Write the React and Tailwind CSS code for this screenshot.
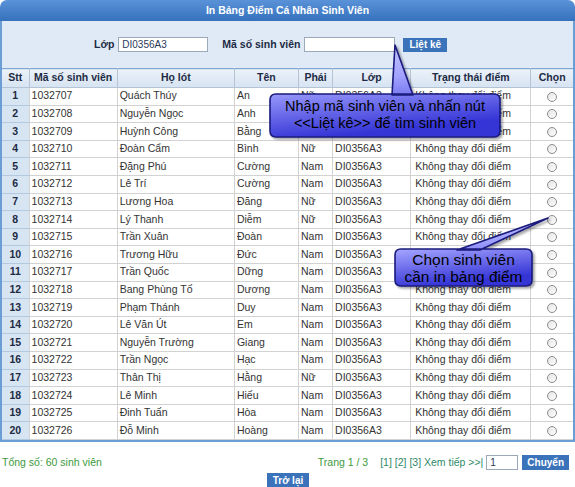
import React from 'react';

const students = [
  ['1032707', 'Quách Thúy', 'An', 'Nữ'],
  ['1032708', 'Nguyễn Ngọc', 'Anh', 'Nữ'],
  ['1032709', 'Huỳnh Công', 'Bằng', 'Nam'],
  ['1032710', 'Đoàn Cẩm', 'Bình', 'Nữ'],
  ['1032711', 'Đặng Phú', 'Cường', 'Nam'],
  ['1032712', 'Lê Trí', 'Cường', 'Nam'],
  ['1032713', 'Lương Hoa', 'Đăng', 'Nữ'],
  ['1032714', 'Lý Thanh', 'Diễm', 'Nữ'],
  ['1032715', 'Trần Xuân', 'Đoàn', 'Nam'],
  ['1032716', 'Trương Hữu', 'Đức', 'Nam'],
  ['1032717', 'Trần Quốc', 'Dững', 'Nam'],
  ['1032718', 'Bang Phùng Tố', 'Dương', 'Nam'],
  ['1032719', 'Phạm Thánh', 'Duy', 'Nam'],
  ['1032720', 'Lê Văn Út', 'Em', 'Nam'],
  ['1032721', 'Nguyễn Trường', 'Giang', 'Nam'],
  ['1032722', 'Trần Ngọc', 'Hạc', 'Nam'],
  ['1032723', 'Thân Thị', 'Hằng', 'Nữ'],
  ['1032724', 'Lê Minh', 'Hiếu', 'Nam'],
  ['1032725', 'Đinh Tuấn', 'Hòa', 'Nam'],
  ['1032726', 'Đỗ Minh', 'Hoàng', 'Nam'],
];

const headers = ['Stt', 'Mã số sinh viên', 'Họ lót', 'Tên', 'Phái', 'Lớp', 'Trạng thái điểm', 'Chọn'];
const widths = ['w-[27px]', 'w-[88px]', 'w-[117px]', 'w-[64px]', 'w-[34px]', 'w-[78px]', 'w-[120px]', 'w-[42px]'];

const Radio = () => (
  <span className="inline-block w-[10px] h-[10px] rounded-full border border-[#8c8c8c] bg-gradient-to-br from-[#e4e4e4] to-white align-middle" />
);

// callout bubble: box + tail drawn as one svg path, text on top
const Callout = ({ className, box, tail, gid, children, textClass }) => (
  <div className={`absolute ${className}`}>
    <svg className="absolute inset-0 overflow-visible" width="100%" height="100%">
      <defs>
        <linearGradient id={gid} x1="0" y1="0" x2="0.25" y2="1">
          <stop offset="0" stopColor="#d4d4ff" />
          <stop offset="0.45" stopColor="#a2a2ff" />
          <stop offset="1" stopColor="#3434d6" />
        </linearGradient>
        <filter id={`${gid}s`} x="-10%" y="-10%" width="130%" height="140%">
          <feDropShadow dx="2" dy="2" stdDeviation="1.2" floodColor="#000" floodOpacity="0.35" />
        </filter>
      </defs>
      <path d={`${box} ${tail}`} fill={`url(#${gid})`} stroke="#1a1a7c" strokeWidth="1.6" strokeLinejoin="round" filter={`url(#${gid}s)`} />
    </svg>
    <div className={`relative text-center text-black leading-[17px] ${textClass}`}>{children}</div>
  </div>
);

export default function App() {
  return (
    <div className="relative w-[575px] h-[487px] bg-white overflow-hidden font-['Liberation_Sans',Arial,sans-serif]">
      <div className="h-[21px] rounded-t-[7px] bg-gradient-to-b from-[#5a92d8] to-[#3572bd] flex items-center justify-center text-white font-bold text-[10.5px]">
        In Bảng Điểm Cá Nhân Sinh Viên
      </div>
      <div className="border-x-2 border-b-2 border-[#6c9ed6] bg-[#dfeaf6]">
        <div className="h-[47px] flex items-center pl-[92px] text-[10.5px] font-bold text-[#1d2a44]">
          <span>Lớp</span>
          <div className="ml-[4px] w-[90px] h-[15px] border border-[#9aa8b8] bg-white px-[3px] text-[10px] font-normal text-[#2a3a5a] leading-[13px]">DI0356A3</div>
          <span className="ml-[14px]">Mã số sinh viên</span>
          <div className="ml-[4px] w-[91px] h-[15px] border border-[#9aa8b8] bg-white" />
          <button className="ml-[8px] h-[14px] px-[6px] bg-[#3a73ba] text-white text-[10px] font-bold leading-[14px]">Liệt kê</button>
        </div>
        <table className="border-collapse table-fixed w-[571px] bg-white text-[10.5px]">
          <thead>
            <tr className="h-[19px] bg-gradient-to-b from-[#eaf1f9] to-[#d6e3f1] border-t border-[#7ea6d2]">
              {headers.map((h, i) => (
                <th key={h} className={`${widths[i]} border-l first:border-l-0 border-b border-[#b4c4d6] font-bold text-[#1d2a44] text-center p-0`}>{h}</th>
              ))}
            </tr>
          </thead>
          <tbody>
            {students.map((s, i) => (
              <tr key={s[0]} className="h-[17.6px]">
                <td className="bg-[#d7e5f3] border-b border-[#b3c9e0] text-center font-bold text-[#1d2a44] p-0">{i + 1}</td>
                <td className="border border-[#d2d2d2] px-[2px] text-[#333]">{s[0]}</td>
                <td className="border border-[#d2d2d2] px-[2px] text-[#333]">{s[1]}</td>
                <td className="border border-[#d2d2d2] px-[2px] text-[#333]">{s[2]}</td>
                <td className="border border-[#d2d2d2] px-[2px] text-[#333]">{s[3]}</td>
                <td className="border border-[#d2d2d2] px-[2px] text-[#333]">DI0356A3</td>
                <td className="border border-[#d2d2d2] px-[4px] text-[#333]">Không thay đổi điểm</td>
                <td className="border border-[#d2d2d2] border-r-0 text-center p-0"><Radio /></td>
              </tr>
            ))}
          </tbody>
        </table>
      </div>

      <div className="mt-[13px] h-[16px] flex items-center text-[10.5px]">
        <span className="ml-[2px] text-[#3c9a3c]">Tổng số: 60 sinh viên</span>
        <span className="ml-auto text-[#3c9a3c]">Trang 1 / 3</span>
        <span className="ml-[12px] text-[#2f8a6a]">[1] [2] [3] Xem tiếp &gt;&gt;|</span>
        <div className="ml-[3px] w-[32px] h-[15px] border border-[#9aa8b8] bg-white px-[3px] text-[10px] leading-[13px] text-[#2a3a5a]">1</div>
        <button className="ml-[4px] mr-[6px] h-[15px] px-[5px] bg-[#3a73ba] text-white text-[10px] font-bold leading-[15px]">Chuyển</button>
      </div>
      <div className="flex justify-center pl-[1px]">
        <button className="mt-[2px] h-[15px] px-[6px] bg-[#3a73ba] text-white text-[10px] font-bold leading-[15px]">Trở lại</button>
      </div>

      <Callout
        className="left-[270px] top-[94px] w-[230px] h-[43px] pt-[4px]"
        gid="g1"
        box="M6 0 H224 Q230 0 230 6 V37 Q230 43 224 43 H6 Q0 43 0 37 V6 Q0 0 6 0 Z"
        tail="M122 1 L125 -49 L143 1 Z"
        textClass="text-[14.5px]"
      >
        Nhập mã sinh viên và nhấn nút<br />&lt;&lt;Liệt kê&gt;&gt; để tìm sinh viên
      </Callout>
      <Callout
        className="left-[395px] top-[249px] w-[137px] h-[37px] pt-[2px]"
        gid="g2"
        box="M6 0 H131 Q137 0 137 6 V31 Q137 37 131 37 H6 Q0 37 0 31 V6 Q0 0 6 0 Z"
        tail="M62 1 L153 -31 L85 1 Z"
        textClass="text-[15.5px]"
      >
        Chọn sinh viên<br />cần in bảng điểm
      </Callout>
    </div>
  );
}
